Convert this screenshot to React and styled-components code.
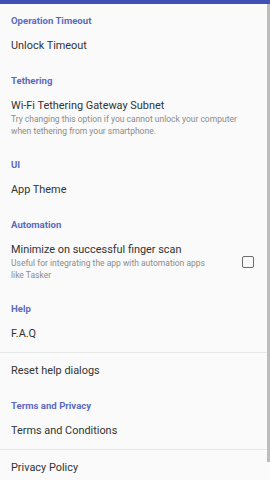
import styled, { createGlobalStyle } from "styled-components";

const GlobalStyle = createGlobalStyle`
  html, body {
    margin: 0;
    padding: 0;
    background: #fafafa;
  }
  * {
    box-sizing: border-box;
  }
`;

const Screen = styled.div`
  position: relative;
  width: 270px;
  height: 480px;
  overflow: hidden;
  background: #fafafa;
  font-family: Roboto, "Noto Sans", sans-serif;
`;

const TopBar = styled.div`
  height: 4px;
  background: #3f51b5;
`;

const ScrollThumb = styled.div`
  position: absolute;
  right: 0;
  top: 4px;
  width: 3px;
  height: 458px;
  background: #bdbdbd;
`;

const CategoryTitle = styled.div`
  padding: 11px 11px 0;
  height: 24px;
  line-height: 12px;
  font-size: 9.6px;
  font-weight: 700;
  color: #5c6bc0;
`;

const Row = styled.div`
  display: flex;
  align-items: center;
  padding: 11px 16px 11px 11px;
  border-bottom: ${(p) => (p.divider ? "1px solid #e6e6e6" : "none")};
`;

const RowText = styled.div`
  flex: 1;
  min-width: 0;
`;

const Title = styled.div`
  font-size: 10.9px;
  line-height: 14px;
  color: #333;
`;

const Summary = styled.div`
  font-size: 8.5px;
  line-height: 12px;
  color: #8c8c8c;
  padding-right: ${(p) => (p.narrow ? "24px" : "0")};
`;

const CheckBox = styled.div`
  width: 12px;
  height: 12px;
  margin-left: 8px;
  border: 1.5px solid #6b6b6b;
  border-radius: 2px;
  flex-shrink: 0;
`;

const Pref = ({ title, summary, checkbox, divider }) => (
  <Row divider={divider}>
    <RowText>
      <Title>{title}</Title>
      {summary && <Summary narrow={checkbox}>{summary}</Summary>}
    </RowText>
    {checkbox && <CheckBox />}
  </Row>
);

export default function App() {
  return (
    <>
      <GlobalStyle />
      <Screen>
        <TopBar />
        <CategoryTitle>Operation Timeout</CategoryTitle>
        <Pref title="Unlock Timeout" />
        <CategoryTitle>Tethering</CategoryTitle>
        <Pref
          title="Wi-Fi Tethering Gateway Subnet"
          summary="Try changing this option if you cannot unlock your computer when tethering from your smartphone."
        />
        <CategoryTitle>UI</CategoryTitle>
        <Pref title="App Theme" />
        <CategoryTitle>Automation</CategoryTitle>
        <Pref
          title="Minimize on successful finger scan"
          summary="Useful for integrating the app with automation apps like Tasker"
          checkbox
        />
        <CategoryTitle>Help</CategoryTitle>
        <Pref title="F.A.Q" divider />
        <Pref title="Reset help dialogs" />
        <CategoryTitle>Terms and Privacy</CategoryTitle>
        <Pref title="Terms and Conditions" divider />
        <Pref title="Privacy Policy" />
        <ScrollThumb />
      </Screen>
    </>
  );
}
